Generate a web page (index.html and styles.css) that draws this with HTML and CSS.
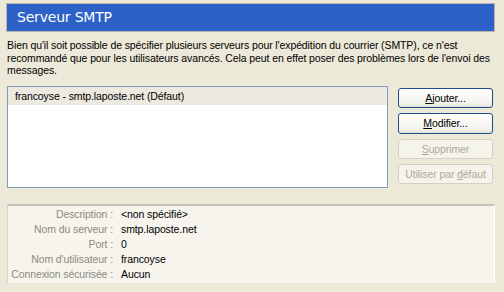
FILE: index.html
```html
<!DOCTYPE html>
<html>
<head>
<title>Serveur SMTP</title>
<link rel="stylesheet" href="styles.css">
</head>
<body>
  <div class="pane">
    <div class="header">Serveur SMTP</div>
    <p class="intro">Bien qu'il soit possible de spécifier plusieurs serveurs pour l'expédition du courrier (SMTP), ce n'est recommandé que pour les utilisateurs avancés. Cela peut en effet poser des problèmes lors de l'envoi des messages.</p>
    <div class="servers">
      <div class="list">
        <div class="item selected">francoyse - smtp.laposte.net (Défaut)</div>
      </div>
      <div class="buttons">
        <button><u>A</u>jouter...</button>
        <button><u>M</u>odifier...</button>
        <button disabled><u>S</u>upprimer</button>
        <button disabled>Utiliser par <u>d</u>éfaut</button>
      </div>
    </div>
    <div class="details">
      <span class="label">Description :</span><span class="value">&lt;non spécifié&gt;</span>
      <span class="label">Nom du serveur :</span><span class="value">smtp.laposte.net</span>
      <span class="label">Port :</span><span class="value">0</span>
      <span class="label">Nom d'utilisateur :</span><span class="value">francoyse</span>
      <span class="label">Connexion sécurisée :</span><span class="value">Aucun</span>
    </div>
  </div>
</body>
</html>
```

FILE: styles.css
```css
body {
  margin: 0;
  background-color: #ece9d8;
  font-family: "Liberation Sans", Arial, sans-serif;
  font-size: 10.5px;
  letter-spacing: -0.1px;
  color: #000000;
}
.pane {
  padding: 3px 9px 0 6px;
}
.header {
  height: 27px;
  line-height: 27px;
  padding-left: 10px;
  background-color: #2c62c8;
  border: 1px solid #b8b6ab;
  color: #ffffff;
  font-family: "DejaVu Sans", sans-serif;
  font-size: 14px;
  letter-spacing: -0.2px;
}
.intro {
  margin: 7px 0 0 1px;
  line-height: 12.5px;
}
.servers {
  display: flex;
  margin: 9px 0 0 1px;
  gap: 10px;
}
.list {
  width: 379px;
  height: 100px;
  background-color: #ffffff;
  border: 1px solid #7f9db9;
}
.item {
  height: 18px;
  line-height: 18px;
  padding-left: 7px;
}
.item.selected {
  background-color: #ece9e0;
}
.buttons {
  display: flex;
  flex-direction: column;
  gap: 5px;
  padding-top: 2px;
}
button {
  width: 95px;
  height: 20px;
  padding: 0;
  font-family: "Liberation Sans", Arial, sans-serif;
  font-size: 10.5px;
  letter-spacing: -0.1px;
  color: #000000;
  background: linear-gradient(#ffffff, #f3f2ee 80%, #e3e1d8);
  border: 1px solid #1d4e87;
  border-radius: 3px;
}
button:nth-child(2) {
  height: 21px;
}
button[disabled] {
  color: #aca899;
  background: #f5f4ea;
  border-color: #d2d0c3;
}
.details {
  display: grid;
  grid-template-columns: 105px 1fr;
  grid-auto-rows: 15px;
  column-gap: 8px;
  margin: 16px 0 0 1px;
  height: 79px;
  padding-top: 1px;
  background-color: #f6f4ed;
  border-top: 2px solid #c7c5b8;
  border-left: 1px solid #d8d5c8;
  border-right: 1px solid #ffffff;
  line-height: 15px;
  box-sizing: border-box;
}
.label {
  text-align: right;
  color: #8c8a80;
  white-space: nowrap;
}
```
